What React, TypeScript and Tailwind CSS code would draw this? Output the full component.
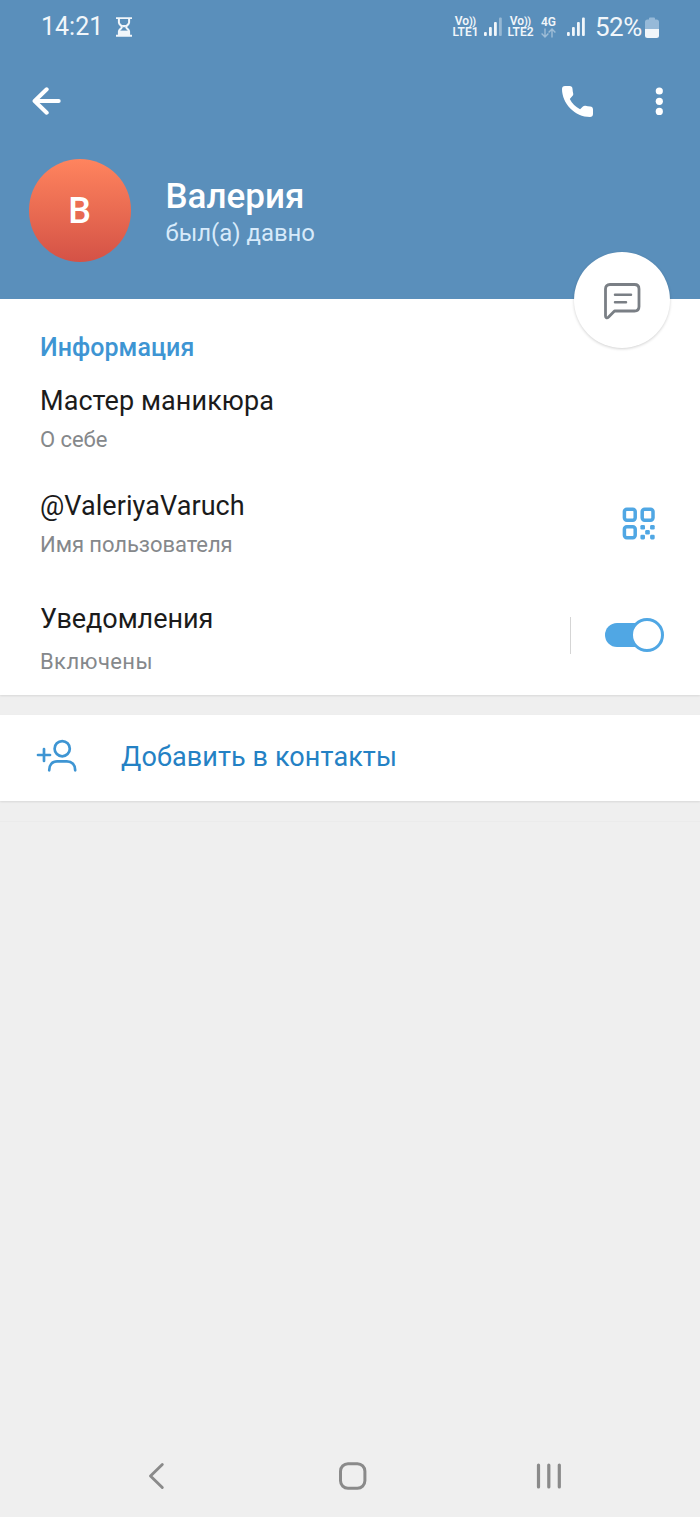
import React from 'react';

const profile = {
  name: 'Валерия',
  initial: 'В',
  lastSeen: 'был(а) давно',
  bio: 'Мастер маникюра',
  username: '@ValeriyaVaruch',
};

function SignalBars({ weak = false }: { weak?: boolean }) {
  return (
    <svg width="18" height="20" viewBox="0 0 18 20" fill="#f1f6fa" className="shrink-0">
      <rect x="0" y="15" width="2.8" height="4" rx="1" />
      <rect x="5" y="10" width="2.8" height="9" rx="1" />
      <rect x="10" y="5" width="2.8" height="14" rx="1" />
      <rect x="15" y="0.5" width="2.8" height="18.5" rx="1" opacity={weak ? 0.4 : 1} />
    </svg>
  );
}

function VoLte({ sim }: { sim: number }) {
  return (
    <div className="flex w-[27px] shrink-0 flex-col items-center text-[12px] leading-[11px] font-semibold whitespace-nowrap">
      <span className="-ml-px">
        Vo<span className="text-[11px] tracking-[-0.8px]">))</span>
      </span>
      <span>LTE{sim}</span>
    </div>
  );
}

function StatusBar() {
  return (
    <div className="flex h-[54px] items-center pl-[41px] text-[#f1f6fa]">
      <span className="w-[61px] text-[25px] leading-[30px]">14:21</span>
      {/* Hourglass */}
      <svg width="16" height="20" viewBox="0 0 16 20" fill="none" stroke="#f1f6fa" className="ml-[14px]">
        <path d="M0 1.1h16M0 18.7h16" strokeWidth="1.9" />
        <path d="M2.900 1.500v4c0 2.300 3 2.800 3 4.500s-3 2.200-3 4.500v4M13.100 1.500v4c0 2.300-3 2.800-3 4.500s3 2.200 3 4.500v4" strokeWidth="2" />
        <path d="M5.500 8h5L9 10.300H7z" fill="#f1f6fa" stroke="none" />
        <path d="M2.600 13.600h10.800v5H2.600z" fill="#f1f6fa" stroke="none" />
      </svg>
      <div className="ml-[320px] flex items-center">
        <VoLte sim={1} />
        <span className="ml-[5px]"><SignalBars weak /></span>
        <span className="ml-[5px]"><VoLte sim={2} /></span>
        <div className="ml-[6px] flex w-[17px] flex-col items-center">
          <span className="text-[12px] leading-[11px] font-semibold">4G</span>
          <svg width="15" height="10" viewBox="0 0 15 10" fill="none" stroke="#f1f6fa" strokeWidth="1.400" opacity="0.45">
            <path d="M4 .5v8.500M.6 5.600L4 9l3.400-3.400M11 9.500V1M7.600 4.400L11 1l3.400 3.400" />
          </svg>
        </div>
        <span className="ml-[10px]"><SignalBars /></span>
        <span className="ml-[10px] w-[47px] text-[26px] leading-[30px] tracking-[-0.5px]">52%</span>
        <svg width="14" height="21" viewBox="0 0 14 21" className="ml-[3px]">
          <path d="M4 2.500V1.500Q4 .5 5 .5h4q1 0 1 1v1h1.500Q14 2.500 14 5v7H0V5q0-2.500 2.500-2.500z" fill="#96b9d8" />
          <path d="M0 12h14v6.500q0 2.500-2.500 2.500h-9Q0 21 0 18.500z" fill="#f1f6fa" />
        </svg>
      </div>
    </div>
  );
}

function Header() {
  return (
    <header className="relative h-[299px] bg-[#5a8fbb] text-white">
      <StatusBar />

      <div className="flex h-[94px] items-center pr-[37px] pl-[32px]">
        <button aria-label="Назад">
          <svg width="29" height="28" viewBox="0 0 29 28" fill="none" stroke="currentColor" strokeWidth="4" strokeLinecap="round" strokeLinejoin="round">
            <path d="M14.700 2.300L2.600 14l12.100 11.700M3.500 14h23.200" />
          </svg>
        </button>
        <button aria-label="Позвонить" className="ml-auto">
          <svg width="31" height="31" viewBox="0 0 31 31" fill="currentColor">
            <path d="M3 0h4.600c1.800 0 2.800 1.100 2.900 2.700.1 1.800.3 3.200.7 4.800.2 1-.1 1.900-.8 2.600L7.800 12.900c2.300 4.500 5.800 8 10.300 10.300l2.800-2.600c.7-.7 1.600-1 2.600-.8 1.600.4 3 .6 4.800.7 1.600.1 2.700 1.100 2.700 2.900V28c0 2-1.200 3-3 3C13 31 0 17.500 0 3 0 1.200 1 0 3 0z" />
          </svg>
        </button>
        <button aria-label="Ещё" className="ml-[62px]">
          <svg width="8" height="28" viewBox="0 0 8 28" fill="currentColor">
            <circle cx="4.300" cy="4" r="3.600" />
            <circle cx="4.300" cy="14.300" r="3.600" />
            <circle cx="4.300" cy="24.400" r="3.600" />
          </svg>
        </button>
      </div>

      <div className="flex pt-[11px] pl-[29px]">
        <div className="flex h-[103px] w-[102px] items-center justify-center rounded-full bg-linear-to-b from-[#ff845e] to-[#d45246] text-[36px] font-medium">
          <span className="-ml-px">{profile.initial}</span>
        </div>
        <div className="ml-[34.500px] pt-[17px]">
          <h1 className="text-[35px] leading-[42px] font-medium">{profile.name}</h1>
          <p className="text-[23.900px] leading-[30px] text-[#d7eafa]">{profile.lastSeen}</p>
        </div>
      </div>

      {/* Message button, half over the info card */}
      <button
        aria-label="Написать"
        className="absolute top-[252px] right-[30px] flex h-[96px] w-[96px] items-center justify-center rounded-full bg-white shadow-[0_1px_3px_rgba(0,0,0,0.18)]"
      >
        <svg width="38" height="38" viewBox="0 0 38 38" fill="none" stroke="#7a7f85" strokeWidth="2.800" strokeLinecap="round" strokeLinejoin="round" className="mt-px mr-px">
          <path d="M7 2.500h24.500q4.500 0 4.500 4.500v17.500q0 4.500-4.500 4.500H11.500l-5.900 6q-1.200 1.100-2.300.7-.8-.4-.8-1.700V7q0-4.500 4.500-4.500z" />
          <path d="M12 12.800h16M12 20.200h11" strokeWidth="2.500" />
        </svg>
      </button>
    </header>
  );
}

function InfoRow({ title, subtitle }: { title: string; subtitle: string }) {
  return (
    <div>
      <p className="text-[27px] leading-[32px] tracking-[0.07px] text-[#1b1b1b]">{title}</p>
      <p className="mt-[9px] text-[22px] leading-[27px] tracking-[-0.06px] text-[#85888b]">{subtitle}</p>
    </div>
  );
}

function QrIcon() {
  return (
    <svg width="33" height="33" viewBox="0 0 33 33" fill="#50a7e4" className="mb-[2px]">
      <g fill="none" stroke="#50a7e4" strokeWidth="3.500">
        <rect x="2.400" y="2.200" width="10.800" height="11" rx="2.400" />
        <rect x="20.200" y="2.200" width="10.800" height="11" rx="2.400" />
        <rect x="2.400" y="19.700" width="10.800" height="11" rx="2.400" />
      </g>
      <rect x="18.400" y="18" width="4.600" height="4.600" rx="1.300" />
      <rect x="28.100" y="18" width="4.600" height="4.600" rx="1.300" />
      <rect x="23.200" y="22.900" width="4.600" height="4.600" rx="1.300" />
      <rect x="18.400" y="27.800" width="4.600" height="4.600" rx="1.300" />
      <rect x="28.100" y="27.800" width="4.600" height="4.600" rx="1.300" />
    </svg>
  );
}

function InfoCard() {
  return (
    <section className="h-[396px] bg-white pt-[34px] pl-[40px] shadow-[0_1px_2px_rgba(0,0,0,0.1)]">
      <h2 className="text-[25px] leading-[30px] font-medium tracking-[0.05px] text-[#3e95d3]">Информация</h2>
      <div className="mt-[22px]">
        <InfoRow title={profile.bio} subtitle="О себе" />
      </div>
      <div className="mt-[37px] flex items-center justify-between pr-[45px]">
        <InfoRow title={profile.username} subtitle="Имя пользователя" />
        <QrIcon />
      </div>
      <div className="mt-[45px] flex items-center pr-[36px]">
        <div>
          <p className="text-[27px] leading-[32px] tracking-[-0.07px] text-[#1b1b1b]">Уведомления</p>
          <p className="mt-[14px] text-[22px] leading-[26px] tracking-[0.4px] text-[#85888b]">Включены</p>
        </div>
        <div className="mb-[7px] ml-auto h-[37px] w-px bg-[#d5d5d5]" />
        <button role="switch" aria-checked="true" aria-label="Уведомления" className="mb-[8px] ml-[34px] flex h-[35px] w-[59px] items-center">
          <span className="h-[24px] w-[42px] rounded-full bg-[#50a7e4]" />
          <span className="-ml-[17px] h-[34px] w-[34px] shrink-0 rounded-full border-3 border-[#50a7e4] bg-white" />
        </button>
      </div>
    </section>
  );
}

function AddContact() {
  return (
    <section className="mt-[20px] flex h-[86px] items-center bg-white pb-[2px] pl-[36px] shadow-[0_1px_2px_rgba(0,0,0,0.1)]">
      <svg width="42" height="34" viewBox="0 0 42 34" fill="none" stroke="#3e95d3" strokeWidth="2.700" strokeLinecap="round" className="mb-[5px]">
        <path d="M2 17h12M8 11v12" />
        <circle cx="26.200" cy="10.700" r="7.600" />
        <path d="M13.200 32.300c0-5.500 2.900-8.900 8-8.900h9.600c5.100 0 8.400 3.400 8.400 8.900" />
      </svg>
      <span className="ml-[43px] text-[27px] leading-[32px] tracking-[0.1px] text-[#2481c4]">Добавить в контакты</span>
    </section>
  );
}

function NavBar() {
  return (
    <nav className="mt-auto flex h-[82px] items-center pl-[148px]">
      <svg width="17" height="28" viewBox="0 0 17 28" fill="none" stroke="#8a8a8a" strokeWidth="2.900" strokeLinecap="round" strokeLinejoin="round">
        <path d="M14.300 2.500L2.500 14l11.800 11.500" />
      </svg>
      <svg width="28" height="28" viewBox="0 0 28 28" fill="none" stroke="#8a8a8a" strokeWidth="3" className="ml-[174px]">
        <rect x="1.500" y="1.700" width="24.400" height="24.600" rx="7.500" />
      </svg>
      <svg width="26" height="28" viewBox="0 0 26 28" fill="none" stroke="#8a8a8a" strokeWidth="3.200" strokeLinecap="round" className="ml-[169px]">
        <path d="M2.500 3v22M12.800 3v22M23.300 3v22" />
      </svg>
    </nav>
  );
}

export default function App() {
  return (
    <main className="flex h-[1517px] w-[700px] flex-col overflow-hidden bg-[#efefef] font-['Roboto',sans-serif]">
      <Header />
      <InfoCard />
      <AddContact />
      <div className="mt-[20px] h-px bg-[#ebebeb]" />
      <NavBar />
    </main>
  );
}
